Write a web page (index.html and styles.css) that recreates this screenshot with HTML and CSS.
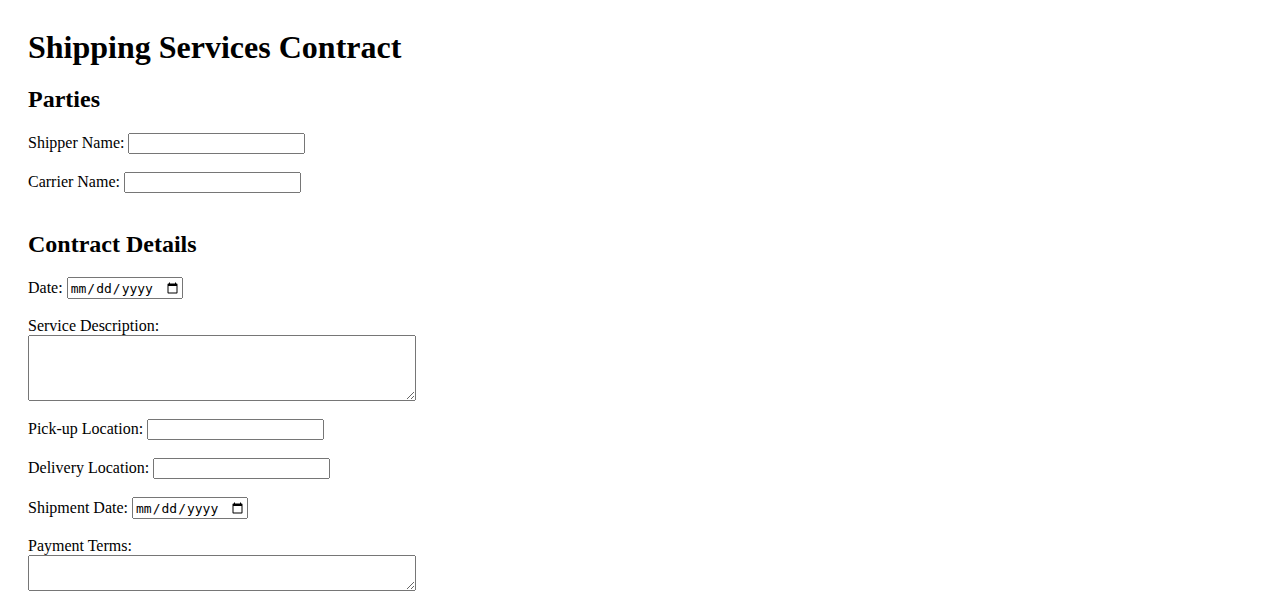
FILE: index.html
```html
<!DOCTYPE html>
<html lang="en">
<head>
<meta charset="utf-8">
<title>Shipping Services Contract</title>
<link rel="stylesheet" href="styles.css">
</head>
<body>
<div class="page">
  <h1 class="title">Shipping Services Contract</h1>
  <section class="section">
    <h2 class="section-title">Parties</h2>
    <p class="field"><label for="shipper">Shipper Name:</label> <input class="text-input" type="text" id="shipper"></p>
    <p class="field"><label for="carrier">Carrier Name:</label> <input class="text-input" type="text" id="carrier"></p>
  </section>
  <section class="section">
    <h2 class="section-title">Contract Details</h2>
    <p class="field"><label for="date">Date:</label> <input class="date-input" type="date" id="date"></p>
    <p class="field"><label for="desc">Service Description:</label><br><textarea class="area area-tall" id="desc"></textarea></p>
    <p class="field"><label for="pickup">Pick-up Location:</label> <input class="text-input" type="text" id="pickup"></p>
    <p class="field"><label for="delivery">Delivery Location:</label> <input class="text-input" type="text" id="delivery"></p>
    <p class="field"><label for="shipdate">Shipment Date:</label> <input class="date-input" type="date" id="shipdate"></p>
    <p class="field"><label for="terms">Payment Terms:</label><br><textarea class="area area-short" id="terms"></textarea></p>
  </section>
</div>
</body>
</html>
```
FILE: styles.css
```css
html, body {
  margin: 0;
  padding: 0;
  background: #ffffff;
}
body {
  font-family: "Liberation Serif", "Times New Roman", serif;
  font-size: 16px;
  color: #000000;
}
.page {
  padding: 29px 28px 20px;
}
.title {
  font-size: 32px;
  font-weight: bold;
  margin: 0 0 20px;
}
.section-title {
  font-size: 24px;
  font-weight: bold;
  margin: 20px 0;
}
.section + .section {
  margin-top: 38px;
}
.section + .section .section-title {
  margin: 0 0 19px;
}
.field {
  margin: 18px 0;
}
.text-input {
  width: 177px;
  height: 21px;
  box-sizing: border-box;
  font-size: 13.333px;
}
.date-input {
  width: 116px;
  height: 22px;
  box-sizing: border-box;
  font-family: "DejaVu Sans Mono", "Liberation Mono", monospace;
  font-size: 13px;
}
.area {
  width: 388px;
  box-sizing: border-box;
  font-family: "Liberation Mono", monospace;
  font-size: 13.333px;
  vertical-align: bottom;
}
.area-tall {
  height: 66px;
}
.area-short {
  height: 36px;
}
```
